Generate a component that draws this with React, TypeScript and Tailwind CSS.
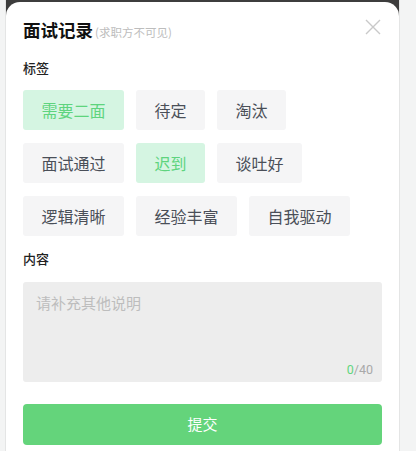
import React from "react";

const rows: { label: string; active?: boolean }[][] = [
  [{ label: "需要二面", active: true }, { label: "待定" }, { label: "淘汰" }],
  [{ label: "面试通过" }, { label: "迟到", active: true }, { label: "谈吐好" }],
  [{ label: "逻辑清晰" }, { label: "经验丰富" }, { label: "自我驱动" }],
];

export default function App() {
  return (
    <div
      className="w-[416px] h-[451px] overflow-hidden bg-[#f3f4f4] flex"
      style={{ fontFamily: '"Noto Sans CJK SC", "Noto Sans", sans-serif' }}
    >
      <div className="ml-[5px] w-[395px] h-full border-l border-r border-[#e4e5e5] bg-[linear-gradient(#3d3d3d_0_16px,#fff_16px)] pt-[2px]">
        <div className="h-full bg-white rounded-t-[14px] px-[17px] pt-[16px]">
          <div className="flex items-center justify-between h-[24px]">
            <div className="flex items-baseline">
              <span className="text-[17.5px] font-bold text-[#111] leading-[24px]">面试记录</span>
              <span className="ml-[2px] text-[11.5px] text-[#bdbdbd]">(求职方不可见)</span>
            </div>
            <svg width="16" height="16" viewBox="0 0 16 16" className="mr-[1px] mt-[-6px]">
              <path d="M1 1 L15 15 M15 1 L1 15" stroke="#c9c9c9" strokeWidth="1.4" fill="none" />
            </svg>
          </div>
          <div className="mt-[16px] text-[13px] leading-[20px] text-[#222] font-medium">标签</div>
          <div className="mt-[12px] flex flex-col gap-y-[13px]">
            {rows.map((row, i) => (
              <div key={i} className="flex gap-x-3">
                {row.map((t) => (
                  <div
                    key={t.label}
                    className={
                      t.active
                        ? "h-[40px] px-[18.5px] flex items-center rounded-[3px] bg-[#d5f5e2] text-[#5ed47e] text-[16px]"
                        : "h-[40px] px-[18.5px] flex items-center rounded-[3px] bg-[#f5f5f6] text-[#4a4f58] text-[16px]"
                    }
                  >
                    {t.label}
                  </div>
                ))}
              </div>
            ))}
          </div>
          <div className="mt-[13px] text-[13px] leading-[20px] text-[#222] font-medium">内容</div>
          <div className="mt-[13px] h-[100px] rounded-[3px] bg-[#ededed] flex flex-col justify-between px-[13px] pt-[10px] pb-[4px]">
            <div className="text-[15px] text-[#bdbdbd] leading-[22px]">请补充其他说明</div>
            <div className="self-end text-[12.5px] leading-[16px] text-[#a9a9a9] mr-[-4px]" style={{ fontFamily: '"Roboto", "Noto Sans", sans-serif' }}>
              <span className="text-[#62d57e]">0</span>/40
            </div>
          </div>
          <div className="mt-[22px] h-[41px] rounded-[4px] bg-[#64d47b] flex items-center justify-center text-white text-[15px]">
            提交
          </div>
        </div>
      </div>
    </div>
  );
}
